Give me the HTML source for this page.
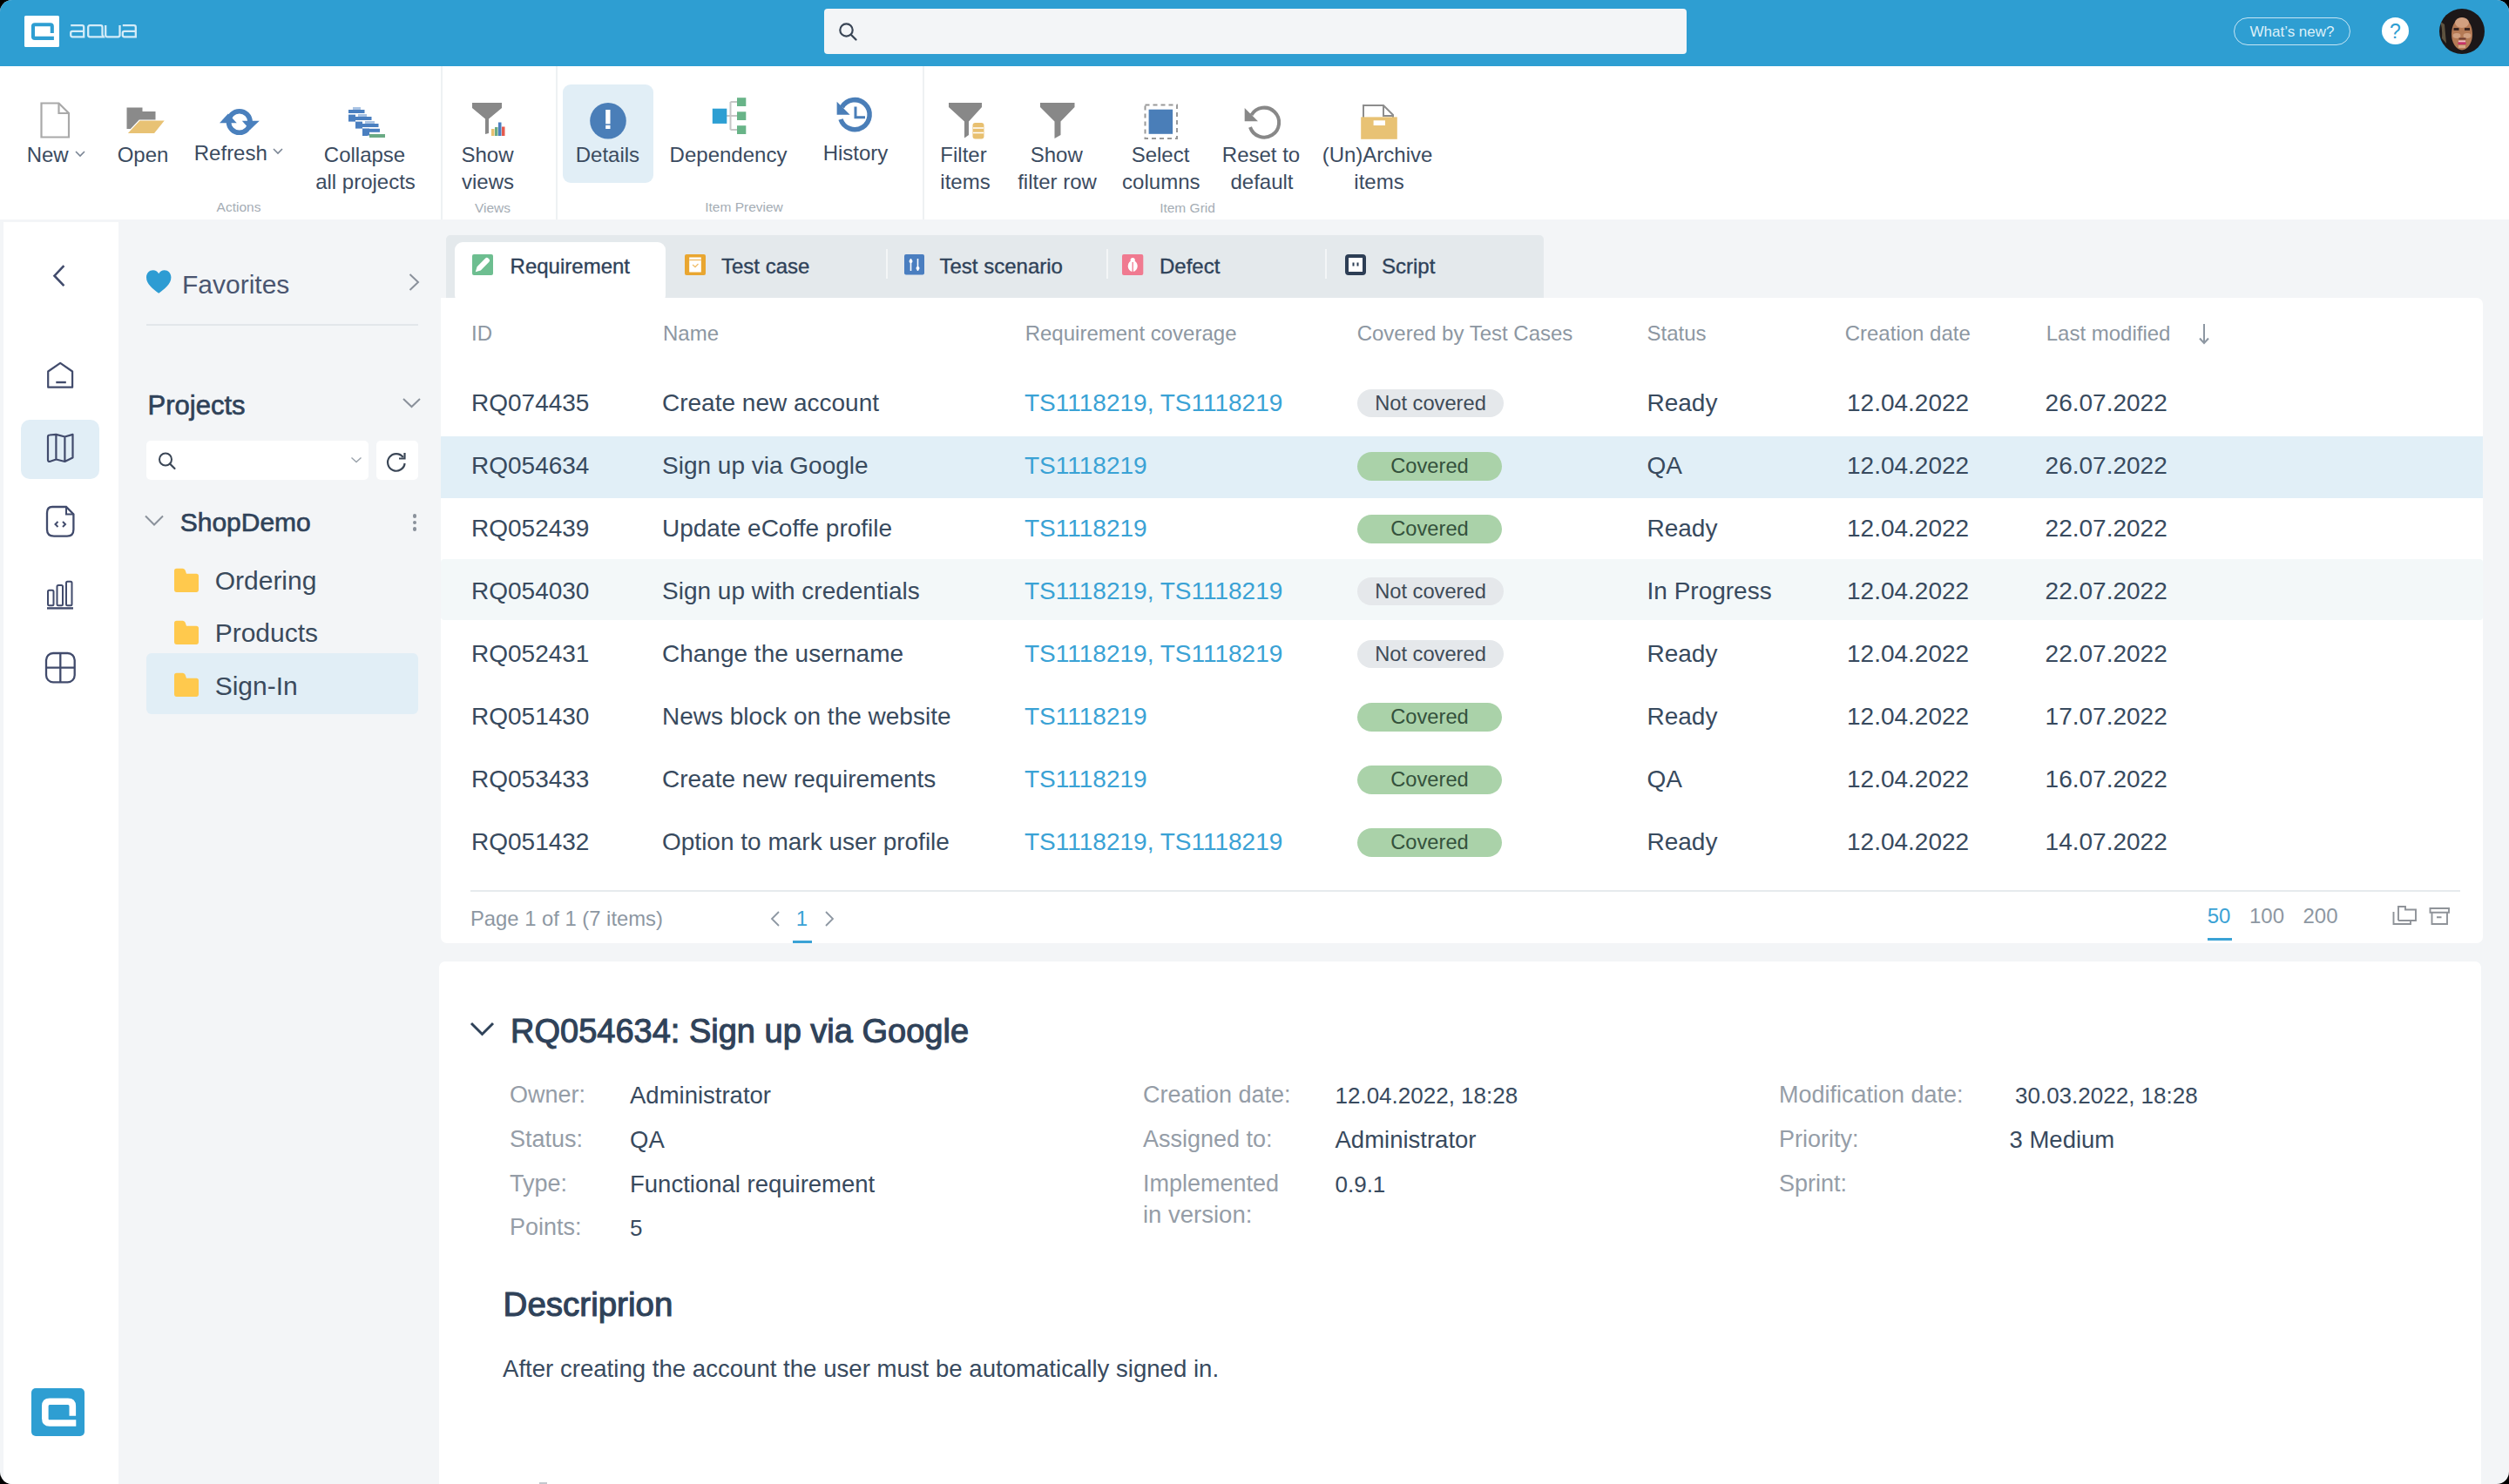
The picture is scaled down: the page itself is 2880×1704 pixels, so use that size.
<!DOCTYPE html>
<html><head><meta charset="utf-8">
<style>
*{margin:0;padding:0;box-sizing:border-box}
html,body{width:2880px;height:1704px;overflow:hidden;background:#000}
body{font-family:"Liberation Sans",sans-serif;color:#33465c}
#app{position:absolute;left:0;top:0;width:2880px;height:1704px;background:#f3f5f7;border-radius:14px;overflow:hidden}
.a{position:absolute;white-space:nowrap}
svg.a{overflow:visible}
</style></head><body>
<div id="app">

<div class="a" style="left:0px;top:0px;width:2880px;height:76px;background:#2e9ed2;border-radius:0px;"></div>
<div class="a" style="left:28px;top:18px;width:40px;height:36px;background:#fff;border-radius:1.5px;"></div>
<svg class="a" style="left:28px;top:18px" width="40" height="36" viewBox="0 0 40 36"><path d="M31.8 20 V12.2 Q31.8 10.2 29.8 10.2 H12 Q10 10.2 10 12.2 V23.9 Q10 25.9 12 25.9 H33.9" fill="none" stroke="#2e9ed2" stroke-width="4.1"/></svg>
<svg class="a" style="left:80px;top:28px" width="78" height="17" viewBox="0 0 78 17"><g fill="none" stroke="#d4ecf8" stroke-width="2.3"><path d="M1.2 1.2 H14.2 Q16.2 1.2 16.2 3.2 V14.3 H3.2 Q1.2 14.3 1.2 12.3 V9.8 Q1.2 7.8 3.2 7.8 H16.2"/><path d="M21.2 3.2 Q21.2 1.2 23.2 1.2 H35.5 Q37.5 1.2 37.5 3.2 V12 L38.8 14.3 H23.2 Q21.2 14.3 21.2 12.3 Z"/><path d="M41.2 1 V12.3 Q41.2 14.3 43.2 14.3 H55.5 Q57.5 14.3 57.5 12.3 V1"/><path d="M60.8 1.2 H73.8 Q75.8 1.2 75.8 3.2 V14.3 H62.8 Q60.8 14.3 60.8 12.3 V9.8 Q60.8 7.8 62.8 7.8 H75.8"/></g></svg>
<div class="a" style="left:946px;top:10px;width:990px;height:52px;background:#f3f5f7;border-radius:4px;"></div>
<svg class="a" style="left:962px;top:25px" width="24" height="24" viewBox="0 0 24 24"><circle cx="9.5" cy="9.5" r="7.2" fill="none" stroke="#3a4656" stroke-width="2.2"/><path d="M15 15 L20.5 20.5" stroke="#3a4656" stroke-width="2.4" stroke-linecap="round"/></svg>
<div class="a" style="left:2564px;top:20px;width:134px;height:32px;border:1.8px solid rgba(235,246,252,0.8);border-radius:16px"></div>
<div class="a" style="left:2331.0px;width:600px;text-align:center;top:27.6px;font-size:17px;line-height:17px;color:#dcf0f9;font-weight:normal;">What’s new?</div>
<div class="a" style="left:2734px;top:20px;width:31px;height:31px;background:#fff;border-radius:50%"></div>
<div class="a" style="left:2449.5px;width:600px;text-align:center;top:24.5px;font-size:23px;line-height:23px;color:#2e9ed2;font-weight:normal;">?</div>
<svg class="a" style="left:2800px;top:10px" width="52" height="52" viewBox="0 0 52 52"><defs><clipPath id="av"><circle cx="26" cy="26" r="26"/></clipPath></defs><g clip-path="url(#av)"><rect width="52" height="52" fill="#1c1718"/><path d="M0 14 Q4 20 3 34 L8 40 L6 18 Z" fill="#8a7a5a" opacity="0.6"/><ellipse cx="26" cy="29" rx="12" ry="18.5" fill="#b47a55"/><ellipse cx="26" cy="16" rx="8" ry="6" fill="#d2a080"/><ellipse cx="20" cy="31" rx="4.5" ry="3" fill="#d0a080"/><ellipse cx="32" cy="31" rx="4.5" ry="3" fill="#d0a080"/><rect x="16.5" y="22" width="6" height="3" fill="#3a2520"/><rect x="29" y="22" width="6" height="3" fill="#3a2520"/><rect x="22.5" y="33.5" width="8" height="2" fill="#6a3a30"/><rect x="22" y="36.5" width="8" height="2" fill="#f0c0c8"/><rect x="21.5" y="38.5" width="9" height="2.5" fill="#c8306a"/><rect x="22" y="42" width="8" height="3" fill="#d8a888"/></g></svg>
<div class="a" style="left:0px;top:76px;width:2880px;height:176px;background:#fff;border-radius:0px;"></div>
<div class="a" style="left:506px;top:76px;width:2px;height:176px;background:#eef1f3;border-radius:0px;"></div>
<div class="a" style="left:638px;top:76px;width:2px;height:176px;background:#eef1f3;border-radius:0px;"></div>
<div class="a" style="left:1059px;top:76px;width:2px;height:176px;background:#eef1f3;border-radius:0px;"></div>
<div class="a" style="left:646px;top:97px;width:104px;height:113px;background:#e1eef6;border-radius:9px;"></div>
<div class="a" style="left:-245.3px;width:600px;text-align:center;top:165.5px;font-size:24px;line-height:24px;color:#3b4b5f;font-weight:normal;">New</div>
<div class="a" style="left:-136.0px;width:600px;text-align:center;top:165.5px;font-size:24px;line-height:24px;color:#3b4b5f;font-weight:normal;">Open</div>
<div class="a" style="left:-35.2px;width:600px;text-align:center;top:164.0px;font-size:24px;line-height:24px;color:#3b4b5f;font-weight:normal;">Refresh</div>
<div class="a" style="left:118.5px;width:600px;text-align:center;top:165.5px;font-size:24px;line-height:24px;color:#3b4b5f;font-weight:normal;">Collapse</div>
<div class="a" style="left:119.5px;width:600px;text-align:center;top:197.1px;font-size:24px;line-height:24px;color:#3b4b5f;font-weight:normal;">all projects</div>
<div class="a" style="left:259.5px;width:600px;text-align:center;top:165.5px;font-size:24px;line-height:24px;color:#3b4b5f;font-weight:normal;">Show</div>
<div class="a" style="left:260.0px;width:600px;text-align:center;top:197.1px;font-size:24px;line-height:24px;color:#3b4b5f;font-weight:normal;">views</div>
<div class="a" style="left:397.4px;width:600px;text-align:center;top:165.5px;font-size:24px;line-height:24px;color:#3b4b5f;font-weight:normal;">Details</div>
<div class="a" style="left:536.0px;width:600px;text-align:center;top:165.5px;font-size:24px;line-height:24px;color:#3b4b5f;font-weight:normal;">Dependency</div>
<div class="a" style="left:682.0px;width:600px;text-align:center;top:164.0px;font-size:24px;line-height:24px;color:#3b4b5f;font-weight:normal;">History</div>
<div class="a" style="left:806.0px;width:600px;text-align:center;top:165.5px;font-size:24px;line-height:24px;color:#3b4b5f;font-weight:normal;">Filter</div>
<div class="a" style="left:808.0px;width:600px;text-align:center;top:197.1px;font-size:24px;line-height:24px;color:#3b4b5f;font-weight:normal;">items</div>
<div class="a" style="left:912.8px;width:600px;text-align:center;top:165.5px;font-size:24px;line-height:24px;color:#3b4b5f;font-weight:normal;">Show</div>
<div class="a" style="left:913.5px;width:600px;text-align:center;top:197.1px;font-size:24px;line-height:24px;color:#3b4b5f;font-weight:normal;">filter row</div>
<div class="a" style="left:1032.0px;width:600px;text-align:center;top:165.5px;font-size:24px;line-height:24px;color:#3b4b5f;font-weight:normal;">Select</div>
<div class="a" style="left:1032.8px;width:600px;text-align:center;top:197.1px;font-size:24px;line-height:24px;color:#3b4b5f;font-weight:normal;">columns</div>
<div class="a" style="left:1147.5px;width:600px;text-align:center;top:165.5px;font-size:24px;line-height:24px;color:#3b4b5f;font-weight:normal;">Reset to</div>
<div class="a" style="left:1148.5px;width:600px;text-align:center;top:197.1px;font-size:24px;line-height:24px;color:#3b4b5f;font-weight:normal;">default</div>
<div class="a" style="left:1281.0px;width:600px;text-align:center;top:165.5px;font-size:24px;line-height:24px;color:#3b4b5f;font-weight:normal;">(Un)Archive</div>
<div class="a" style="left:1283.0px;width:600px;text-align:center;top:197.1px;font-size:24px;line-height:24px;color:#3b4b5f;font-weight:normal;">items</div>
<div class="a" style="left:-26.0px;width:600px;text-align:center;top:229.9px;font-size:15.5px;line-height:15.5px;color:#a5adb5;font-weight:normal;">Actions</div>
<div class="a" style="left:265.5px;width:600px;text-align:center;top:231.4px;font-size:15.5px;line-height:15.5px;color:#a5adb5;font-weight:normal;">Views</div>
<div class="a" style="left:554.0px;width:600px;text-align:center;top:229.9px;font-size:15.5px;line-height:15.5px;color:#a5adb5;font-weight:normal;">Item Preview</div>
<div class="a" style="left:1063.0px;width:600px;text-align:center;top:230.6px;font-size:15.5px;line-height:15.5px;color:#a5adb5;font-weight:normal;">Item Grid</div>
<svg class="a" style="left:86px;top:173px" width="12" height="8" viewBox="0 0 12 8"><path d="M1 1 L6 6 L11 1" fill="none" stroke="#7a8594" stroke-width="1.6"/></svg>
<svg class="a" style="left:313px;top:170px" width="12" height="8" viewBox="0 0 12 8"><path d="M1 1 L6 6 L11 1" fill="none" stroke="#7a8594" stroke-width="1.6"/></svg>
<svg class="a" style="left:46px;top:117px" width="35" height="42" viewBox="0 0 35 42"><path d="M1.5 1.5 H21.5 L33 13 V40.5 H1.5 Z" fill="#fff" stroke="#a9a9a9" stroke-width="2.2"/><path d="M21.5 1.5 V13 H33" fill="none" stroke="#a9a9a9" stroke-width="2.2"/></svg>
<svg class="a" style="left:145px;top:123px" width="46" height="31" viewBox="0 0 46 31"><path d="M0.5 0.5 H18.5 V5 H33.5 V25 H0.5 Z" fill="#8a8a8a"/><path d="M0.5 30.5 H32.5 L45 15 H15 Z" fill="#e8c274" stroke="#fff" stroke-width="1.2"/></svg>
<svg class="a" style="left:250px;top:120px" width="50" height="38" viewBox="0 0 50 38"><circle cx="24.8" cy="20" r="12.3" fill="none" stroke="#4a80bd" stroke-width="5.6"/><path d="M11.9 10.5 L2 21.2 L21.8 21.2 Z" fill="#4a80bd"/><path d="M37 29 L27.8 18.7 L47.8 18.7 Z" fill="#4a80bd"/></svg>
<svg class="a" style="left:400px;top:123px" width="44" height="36" viewBox="0 0 44 36"><g fill="#4a7fc0"><rect x="0" y="3" width="18.5" height="4"/><rect x="0" y="8.6" width="8" height="8"/><rect x="8" y="11" width="18.5" height="4"/><rect x="8" y="16.6" width="8" height="8"/><rect x="16" y="19" width="18.5" height="4"/><rect x="16" y="24.6" width="8" height="8"/><rect x="16" y="24.8" width="20" height="4"/><rect x="16" y="29" width="6" height="4"/></g><rect x="24" y="31" width="18" height="4" fill="#6aaa84"/><g fill="#a9c3e3"><rect x="5" y="0" width="9" height="3"/><rect x="11" y="8" width="10" height="3"/><rect x="19" y="16" width="11" height="3"/></g></svg>
<svg class="a" style="left:542px;top:118px" width="40" height="40" viewBox="0 0 40 40"><path d="M0 0 H34 V6 L19 18.5 V35 L15 36 V18.5 L0 6 Z" fill="#888"/><rect x="22" y="30" width="3.5" height="8" fill="#e8c070"/><rect x="26" y="28" width="3.5" height="10" fill="#6aaa84"/><rect x="30" y="22.5" width="3.5" height="15.5" fill="#4a7fc0"/><rect x="34" y="27.5" width="3.5" height="10.5" fill="#e55a4e"/></svg>
<svg class="a" style="left:676px;top:117px" width="44" height="44" viewBox="0 0 44 44"><circle cx="22" cy="21.7" r="20.8" fill="#4a7eb8"/><rect x="19.2" y="9" width="5.3" height="16.3" fill="#fff"/><rect x="19.2" y="26.8" width="5.3" height="4.2" fill="#fff"/></svg>
<svg class="a" style="left:816px;top:111px" width="42" height="45" viewBox="0 0 42 45"><path d="M22.5 6 V38 M22.5 6 H30 M22.5 22 H30 M22.5 38 H30 M18 22 H22.5" stroke="#c6c6c6" stroke-width="2" fill="none"/><rect x="1.8" y="13.7" width="16.5" height="17.2" fill="#2d9fd3"/><rect x="30" y="1.2" width="10.3" height="9.8" fill="#68b488"/><rect x="30" y="17.3" width="10.3" height="9.7" fill="#68b488"/><rect x="30" y="33.2" width="10.3" height="9.8" fill="#68b488"/></svg>
<svg class="a" style="left:958px;top:111px" width="46" height="44" viewBox="0 0 46 44"><path d="M8.5 12 A17 17 0 1 1 7 26" fill="none" stroke="#4a7eb8" stroke-width="5.5"/><path d="M2.6 5.8 V20.8 H17.6 Z" fill="#4a7eb8"/><path d="M24 11.5 V23.7 H35" fill="none" stroke="#4a7eb8" stroke-width="3"/></svg>
<svg class="a" style="left:1088px;top:117px" width="44" height="44" viewBox="0 0 44 44"><path d="M1 1 H39 V6 L24 22.5 V38 L19 41.5 V22.5 L1 6 Z" fill="#888"/><g fill="#e8c070"><rect x="28.5" y="24" width="13" height="18.5" rx="3"/></g><path d="M29 30 H41 M29 35.5 H41" stroke="#fff" stroke-width="1.4"/></svg>
<svg class="a" style="left:1193px;top:117px" width="42" height="44" viewBox="0 0 42 44"><path d="M1 1 H40.5 V6 L24.5 22.5 V38 L17.5 42 V22.5 L1 6 Z" fill="#888"/></svg>
<svg class="a" style="left:1313px;top:119px" width="40" height="42" viewBox="0 0 40 42"><rect x="1.5" y="1.5" width="36.5" height="38.5" fill="none" stroke="#999" stroke-width="2" stroke-dasharray="5 4"/><rect x="5.6" y="6.7" width="27.5" height="28.1" fill="#4a7eb8"/></svg>
<svg class="a" style="left:1427px;top:119px" width="46" height="42" viewBox="0 0 46 42"><path d="M9.5 13 A17 17 0 1 1 8 27" fill="none" stroke="#888" stroke-width="4"/><path d="M1.7 4.9 V20.2 H17 Z" fill="#888"/></svg>
<svg class="a" style="left:1562px;top:119px" width="44" height="42" viewBox="0 0 44 42"><path d="M3 2 H26 L37 13 V17 H3 Z" fill="#fff" stroke="#8d8d8d" stroke-width="2"/><path d="M26 2 V14 H37" fill="none" stroke="#8d8d8d" stroke-width="2"/><rect x="0.2" y="15.4" width="41.6" height="25.4" fill="#e8c274"/><rect x="14.6" y="19.3" width="13.4" height="5.7" fill="#fff"/></svg>
<div class="a" style="left:4px;top:255px;width:132px;height:1449px;background:#fff;border-radius:0px;"></div>
<svg class="a" style="left:58px;top:302px" width="20" height="30" viewBox="0 0 20 30"><path d="M15.4 3.2 L4.5 14.7 L15.4 26.2" fill="none" stroke="#414b6c" stroke-width="2.6"/></svg>
<svg class="a" style="left:52px;top:413px" width="34" height="35" viewBox="0 0 34 35"><path d="M3.2 13.5 L17.2 3.8 L31.1 13.5 V31.7 H3.2 Z" fill="none" stroke="#414b6c" stroke-width="2.2" stroke-linejoin="round"/><path d="M12.3 26 H23.8" stroke="#414b6c" stroke-width="2.4"/></svg>
<div class="a" style="left:24px;top:482px;width:90px;height:68px;background:#e1eef6;border-radius:10px;"></div>
<svg class="a" style="left:52px;top:496px" width="36" height="37" viewBox="0 0 36 37"><path d="M3 5.5 Q3 3.5 5 3.5 L12.4 2.9 L22.4 5.5 L31.5 2.9 V29.5 L22.4 34 L12.4 31.5 L5 34 Q3 34 3 32 Z M12.4 2.9 V31.5 M22.4 5.5 V34" fill="none" stroke="#414b6c" stroke-width="2.2" stroke-linejoin="round"/></svg>
<svg class="a" style="left:52px;top:580px" width="36" height="38" viewBox="0 0 36 38"><path d="M8 2 H24 L32.4 10.4 V28 Q32.4 35.6 25 35.6 H10 Q2 35.6 2 28 V9 Q2 2 8 2 Z" fill="none" stroke="#414b6c" stroke-width="2.3"/><path d="M24 2 V10.4 H32.4" fill="none" stroke="#414b6c" stroke-width="2"/><path d="M14.5 19 L11.5 22 L14.5 25 M20 19 L23 22 L20 25" fill="none" stroke="#414b6c" stroke-width="2"/></svg>
<svg class="a" style="left:52px;top:664px" width="36" height="38" viewBox="0 0 36 38"><g fill="none" stroke="#414b6c" stroke-width="2"><rect x="3" y="13.7" width="6.5" height="17.5" rx="1.5"/><rect x="13.5" y="8" width="6.5" height="23.2" rx="1.5"/><rect x="24" y="3.7" width="6.5" height="27.5" rx="1.5"/></g><path d="M2 34.4 H32" stroke="#414b6c" stroke-width="2.4"/></svg>
<svg class="a" style="left:51px;top:748px" width="38" height="38" viewBox="0 0 38 38"><rect x="2" y="2" width="32.7" height="33.3" rx="8" fill="none" stroke="#414b6c" stroke-width="2.3"/><path d="M18.3 2 V35.3 M2 18.6 H34.7" stroke="#414b6c" stroke-width="2.3"/></svg>
<div class="a" style="left:36px;top:1594px;width:61px;height:55px;background:#2e9ed2;border-radius:5px;"></div>
<svg class="a" style="left:36px;top:1594px" width="61" height="55" viewBox="0 0 61 55"><path d="M47.3 31.8 V20.5 Q47.3 15.2 42 15.2 H21 Q15.8 15.2 15.8 20.5 V34.5 Q15.8 40 21 40 H51.3" fill="none" stroke="#fff" stroke-width="7.6"/></svg>
<svg class="a" style="left:167px;top:309px" width="31" height="30" viewBox="0 0 31 30"><path d="M15.2 27.8 C9 23 1 17.5 1 9.5 C1 4.5 4.5 1.2 8.7 1.2 C11.5 1.2 13.7 2.8 15.2 5.2 C16.7 2.8 18.9 1.2 21.7 1.2 C25.9 1.2 29.4 4.5 29.4 9.5 C29.4 17.5 21.4 23 15.2 27.8 Z" fill="#2d9cd3"/></svg>
<div class="a" style="left:209.0px;top:311.7px;font-size:30px;line-height:30px;color:#4a5570;font-weight:normal;">Favorites</div>
<svg class="a" style="left:468px;top:313px" width="16" height="22" viewBox="0 0 16 22"><path d="M2.5 2 L12 11 L2.5 20" fill="none" stroke="#8a919b" stroke-width="2"/></svg>
<div class="a" style="left:168px;top:372px;width:312px;height:2px;background:#e2e6ea;border-radius:0px;"></div>
<div class="a" style="left:169.6px;top:449.5px;font-size:31px;line-height:31px;color:#2f4259;font-weight:normal;-webkit-text-stroke:0.65px #2f4259">Projects</div>
<svg class="a" style="left:461px;top:456px" width="23" height="14" viewBox="0 0 23 14"><path d="M2 2 L11.5 11 L21 2" fill="none" stroke="#8a919b" stroke-width="2"/></svg>
<div class="a" style="left:168px;top:506px;width:255px;height:45px;background:#fff;border-radius:5px;"></div>
<div class="a" style="left:432px;top:506px;width:48px;height:45px;background:#fff;border-radius:5px;"></div>
<svg class="a" style="left:181px;top:518px" width="24" height="24" viewBox="0 0 24 24"><circle cx="9" cy="9.5" r="7" fill="none" stroke="#3a4656" stroke-width="2"/><path d="M14 14.5 L19.5 20" stroke="#3a4656" stroke-width="2.2" stroke-linecap="round"/></svg>
<svg class="a" style="left:402px;top:524px" width="14" height="9" viewBox="0 0 14 9"><path d="M1.5 1.5 L7 6.5 L12.5 1.5" fill="none" stroke="#9aa2ab" stroke-width="1.4"/></svg>
<svg class="a" style="left:442px;top:517px" width="26" height="24" viewBox="0 0 26 24"><path d="M20.7 8 A9.8 9.8 0 1 0 22.6 15" fill="none" stroke="#3a4656" stroke-width="2.2"/><path d="M22.5 3 V9.5 H16" fill="none" stroke="#3a4656" stroke-width="2.2"/></svg>
<svg class="a" style="left:165px;top:590px" width="24" height="16" viewBox="0 0 24 16"><path d="M2 2.5 L12 12.5 L22 2.5" fill="none" stroke="#8a919b" stroke-width="2"/></svg>
<div class="a" style="left:206.7px;top:584.8px;font-size:30px;line-height:30px;color:#2f4259;font-weight:normal;-webkit-text-stroke:0.65px #2f4259">ShopDemo</div>
<div class="a" style="left:473.5px;top:590px;width:4.5px;height:4.5px;border-radius:50%;background:#8a919b"></div>
<div class="a" style="left:473.5px;top:597.5px;width:4.5px;height:4.5px;border-radius:50%;background:#8a919b"></div>
<div class="a" style="left:473.5px;top:605px;width:4.5px;height:4.5px;border-radius:50%;background:#8a919b"></div>
<div class="a" style="left:168px;top:750px;width:312px;height:70px;background:#e1eef6;border-radius:6px;"></div>
<svg class="a" style="left:199px;top:651.5px" width="30" height="29" viewBox="0 0 30 29"><path d="M1 3.5 Q1 0.8 3.8 0.8 H10.5 Q12.5 0.8 13.5 2.5 L15 6.8 H26.3 Q29 6.8 29 9.5 V25 Q29 28 26.3 28 H3.8 Q1 28 1 25 Z" fill="#ffc94d"/></svg>
<svg class="a" style="left:199px;top:711.5px" width="30" height="29" viewBox="0 0 30 29"><path d="M1 3.5 Q1 0.8 3.8 0.8 H10.5 Q12.5 0.8 13.5 2.5 L15 6.8 H26.3 Q29 6.8 29 9.5 V25 Q29 28 26.3 28 H3.8 Q1 28 1 25 Z" fill="#ffc94d"/></svg>
<svg class="a" style="left:199px;top:772px" width="30" height="29" viewBox="0 0 30 29"><path d="M1 3.5 Q1 0.8 3.8 0.8 H10.5 Q12.5 0.8 13.5 2.5 L15 6.8 H26.3 Q29 6.8 29 9.5 V25 Q29 28 26.3 28 H3.8 Q1 28 1 25 Z" fill="#ffc94d"/></svg>
<div class="a" style="left:246.7px;top:652.3px;font-size:30px;line-height:30px;color:#3a4a5c;font-weight:normal;">Ordering</div>
<div class="a" style="left:246.7px;top:712.3px;font-size:30px;line-height:30px;color:#3a4a5c;font-weight:normal;">Products</div>
<div class="a" style="left:246.7px;top:772.6px;font-size:30px;line-height:30px;color:#3a4a5c;font-weight:normal;">Sign-In</div>
<div class="a" style="left:512px;top:270px;width:1260px;height:80px;background:#e4e9ec;border-radius:5px;"></div>
<div class="a" style="left:506px;top:342px;width:2344px;height:741px;background:#fff;border-radius:0px;border-radius:0 7px 7px 7px"></div>
<div class="a" style="left:522px;top:278px;width:242px;height:70px;background:#fff;border-radius:9px;"></div>
<svg class="a" style="left:542px;top:292px" width="24" height="24" viewBox="0 0 24 24"><rect width="24" height="24" rx="2" fill="#6dbe90"/><path d="M3.8 20.2 L5.6 14.2 L15.2 4.6 Q16.8 3 18.4 4.6 L19.4 5.6 Q21 7.2 19.4 8.8 L9.8 18.4 Z" fill="#fff"/></svg>
<svg class="a" style="left:786px;top:292px" width="24" height="24" viewBox="0 0 24 24"><rect width="24" height="24" rx="2" fill="#e9a630"/><rect x="5.2" y="3.5" width="13.6" height="17" fill="#fff"/><path d="M5.2 6.5 H18.8" stroke="#f0c070" stroke-width="1.5"/><path d="M9 12 L12 14.5 L15.5 11" stroke="#f0c070" stroke-width="1.4" fill="none"/></svg>
<svg class="a" style="left:1038px;top:292px" width="23" height="24" viewBox="0 0 23 24"><rect width="23" height="23.5" rx="2" fill="#4a7ec0"/><path d="M7.5 5 V19 M15.5 5 V19" stroke="#fff" stroke-width="1.6"/><circle cx="7.5" cy="8" r="2" fill="#fff"/><circle cx="15.5" cy="16" r="2" fill="#fff"/></svg>
<svg class="a" style="left:1288px;top:292px" width="25" height="24" viewBox="0 0 25 24"><rect width="24.3" height="24" rx="2" fill="#f07a90"/><ellipse cx="12.2" cy="13.5" rx="5.5" ry="6.5" fill="#fff"/><path d="M12.2 7 V20" stroke="#f07a90" stroke-width="1.3"/><circle cx="12.2" cy="6.5" r="2.6" fill="#fff"/></svg>
<svg class="a" style="left:1544px;top:292px" width="24" height="24" viewBox="0 0 24 24"><rect x="2" y="2" width="20" height="20" rx="2" fill="#fff" stroke="#2d3e55" stroke-width="4"/><rect x="8.5" y="9.5" width="2" height="4" fill="#2d3e55"/><rect x="13.5" y="9.5" width="2" height="4" fill="#2d3e55"/></svg>
<div class="a" style="left:1017px;top:286px;width:2px;height:34px;background:#f4f6f7;border-radius:0px;"></div>
<div class="a" style="left:1270px;top:286px;width:2px;height:34px;background:#f4f6f7;border-radius:0px;"></div>
<div class="a" style="left:1521px;top:286px;width:2px;height:34px;background:#f4f6f7;border-radius:0px;"></div>
<div class="a" style="left:585.6px;top:293.7px;font-size:24px;line-height:24px;color:#2f4259;font-weight:normal;-webkit-text-stroke:0.35px #2f4259">Requirement</div>
<div class="a" style="left:828.0px;top:293.7px;font-size:24px;line-height:24px;color:#2f4259;font-weight:normal;-webkit-text-stroke:0.35px #2f4259">Test case</div>
<div class="a" style="left:1078.5px;top:293.7px;font-size:24px;line-height:24px;color:#2f4259;font-weight:normal;-webkit-text-stroke:0.35px #2f4259">Test scenario</div>
<div class="a" style="left:1331.0px;top:293.7px;font-size:24px;line-height:24px;color:#2f4259;font-weight:normal;-webkit-text-stroke:0.35px #2f4259">Defect</div>
<div class="a" style="left:1586.0px;top:293.7px;font-size:24px;line-height:24px;color:#2f4259;font-weight:normal;-webkit-text-stroke:0.35px #2f4259">Script</div>
<div class="a" style="left:541.0px;top:370.7px;font-size:24px;line-height:24px;color:#8d97a2;font-weight:normal;">ID</div>
<div class="a" style="left:761.0px;top:370.7px;font-size:24px;line-height:24px;color:#8d97a2;font-weight:normal;">Name</div>
<div class="a" style="left:1176.7px;top:370.7px;font-size:24px;line-height:24px;color:#8d97a2;font-weight:normal;">Requirement coverage</div>
<div class="a" style="left:1557.7px;top:370.7px;font-size:24px;line-height:24px;color:#8d97a2;font-weight:normal;">Covered by Test Cases</div>
<div class="a" style="left:1890.5px;top:370.7px;font-size:24px;line-height:24px;color:#8d97a2;font-weight:normal;">Status</div>
<div class="a" style="left:2117.7px;top:370.7px;font-size:24px;line-height:24px;color:#8d97a2;font-weight:normal;">Creation date</div>
<div class="a" style="left:2348.7px;top:370.7px;font-size:24px;line-height:24px;color:#8d97a2;font-weight:normal;">Last modified</div>
<svg class="a" style="left:2522px;top:370px" width="16" height="28" viewBox="0 0 16 28"><path d="M8 2 V24 M3 18.5 L8 24 L13 18.5" fill="none" stroke="#8d97a2" stroke-width="2"/></svg>
<div class="a" style="left:506px;top:501px;width:2344px;height:71px;background:#e1eff7;border-radius:0px;"></div>
<div class="a" style="left:506px;top:642px;width:2344px;height:70px;background:#f3f8f9;border-radius:4px;"></div>
<div class="a" style="left:541.0px;top:449.3px;font-size:28px;line-height:28px;color:#384a5e;font-weight:normal;">RQ074435</div>
<div class="a" style="left:760.0px;top:449.3px;font-size:28px;line-height:28px;color:#384a5e;font-weight:normal;">Create new account</div>
<div class="a" style="left:1176.0px;top:449.3px;font-size:28px;line-height:28px;color:#3aa2d5;font-weight:normal;">TS1118219, TS1118219</div>
<div class="a" style="left:1558px;top:447px;width:168px;height:32px;background:#e5e8eb;border-radius:16px;"></div>
<div class="a" style="left:1342.0px;width:600px;text-align:center;top:452.4px;font-size:23.7px;line-height:23.7px;color:#3e4b58;font-weight:normal;">Not covered</div>
<div class="a" style="left:1890.5px;top:449.3px;font-size:28px;line-height:28px;color:#384a5e;font-weight:normal;">Ready</div>
<div class="a" style="left:2120.0px;top:449.3px;font-size:28px;line-height:28px;color:#384a5e;font-weight:normal;">12.04.2022</div>
<div class="a" style="left:2347.6px;top:449.3px;font-size:28px;line-height:28px;color:#384a5e;font-weight:normal;">26.07.2022</div>
<div class="a" style="left:541.0px;top:521.3px;font-size:28px;line-height:28px;color:#384a5e;font-weight:normal;">RQ054634</div>
<div class="a" style="left:760.0px;top:521.3px;font-size:28px;line-height:28px;color:#384a5e;font-weight:normal;">Sign up via Google</div>
<div class="a" style="left:1176.0px;top:521.3px;font-size:28px;line-height:28px;color:#3aa2d5;font-weight:normal;">TS1118219</div>
<div class="a" style="left:1558px;top:519px;width:166px;height:33px;background:#aad2a9;border-radius:17px;"></div>
<div class="a" style="left:1341.0px;width:600px;text-align:center;top:524.4px;font-size:23.7px;line-height:23.7px;color:#34513c;font-weight:normal;">Covered</div>
<div class="a" style="left:1890.5px;top:521.3px;font-size:28px;line-height:28px;color:#384a5e;font-weight:normal;">QA</div>
<div class="a" style="left:2120.0px;top:521.3px;font-size:28px;line-height:28px;color:#384a5e;font-weight:normal;">12.04.2022</div>
<div class="a" style="left:2347.6px;top:521.3px;font-size:28px;line-height:28px;color:#384a5e;font-weight:normal;">26.07.2022</div>
<div class="a" style="left:541.0px;top:593.3px;font-size:28px;line-height:28px;color:#384a5e;font-weight:normal;">RQ052439</div>
<div class="a" style="left:760.0px;top:593.3px;font-size:28px;line-height:28px;color:#384a5e;font-weight:normal;">Update eCoffe profile</div>
<div class="a" style="left:1176.0px;top:593.3px;font-size:28px;line-height:28px;color:#3aa2d5;font-weight:normal;">TS1118219</div>
<div class="a" style="left:1558px;top:591px;width:166px;height:33px;background:#aad2a9;border-radius:17px;"></div>
<div class="a" style="left:1341.0px;width:600px;text-align:center;top:596.4px;font-size:23.7px;line-height:23.7px;color:#34513c;font-weight:normal;">Covered</div>
<div class="a" style="left:1890.5px;top:593.3px;font-size:28px;line-height:28px;color:#384a5e;font-weight:normal;">Ready</div>
<div class="a" style="left:2120.0px;top:593.3px;font-size:28px;line-height:28px;color:#384a5e;font-weight:normal;">12.04.2022</div>
<div class="a" style="left:2347.6px;top:593.3px;font-size:28px;line-height:28px;color:#384a5e;font-weight:normal;">22.07.2022</div>
<div class="a" style="left:541.0px;top:665.3px;font-size:28px;line-height:28px;color:#384a5e;font-weight:normal;">RQ054030</div>
<div class="a" style="left:760.0px;top:665.3px;font-size:28px;line-height:28px;color:#384a5e;font-weight:normal;">Sign up with credentials</div>
<div class="a" style="left:1176.0px;top:665.3px;font-size:28px;line-height:28px;color:#3aa2d5;font-weight:normal;">TS1118219, TS1118219</div>
<div class="a" style="left:1558px;top:663px;width:168px;height:32px;background:#e5e8eb;border-radius:16px;"></div>
<div class="a" style="left:1342.0px;width:600px;text-align:center;top:668.4px;font-size:23.7px;line-height:23.7px;color:#3e4b58;font-weight:normal;">Not covered</div>
<div class="a" style="left:1890.5px;top:665.3px;font-size:28px;line-height:28px;color:#384a5e;font-weight:normal;">In Progress</div>
<div class="a" style="left:2120.0px;top:665.3px;font-size:28px;line-height:28px;color:#384a5e;font-weight:normal;">12.04.2022</div>
<div class="a" style="left:2347.6px;top:665.3px;font-size:28px;line-height:28px;color:#384a5e;font-weight:normal;">22.07.2022</div>
<div class="a" style="left:541.0px;top:737.3px;font-size:28px;line-height:28px;color:#384a5e;font-weight:normal;">RQ052431</div>
<div class="a" style="left:760.0px;top:737.3px;font-size:28px;line-height:28px;color:#384a5e;font-weight:normal;">Change the username</div>
<div class="a" style="left:1176.0px;top:737.3px;font-size:28px;line-height:28px;color:#3aa2d5;font-weight:normal;">TS1118219, TS1118219</div>
<div class="a" style="left:1558px;top:735px;width:168px;height:32px;background:#e5e8eb;border-radius:16px;"></div>
<div class="a" style="left:1342.0px;width:600px;text-align:center;top:740.4px;font-size:23.7px;line-height:23.7px;color:#3e4b58;font-weight:normal;">Not covered</div>
<div class="a" style="left:1890.5px;top:737.3px;font-size:28px;line-height:28px;color:#384a5e;font-weight:normal;">Ready</div>
<div class="a" style="left:2120.0px;top:737.3px;font-size:28px;line-height:28px;color:#384a5e;font-weight:normal;">12.04.2022</div>
<div class="a" style="left:2347.6px;top:737.3px;font-size:28px;line-height:28px;color:#384a5e;font-weight:normal;">22.07.2022</div>
<div class="a" style="left:541.0px;top:809.3px;font-size:28px;line-height:28px;color:#384a5e;font-weight:normal;">RQ051430</div>
<div class="a" style="left:760.0px;top:809.3px;font-size:28px;line-height:28px;color:#384a5e;font-weight:normal;">News block on the website</div>
<div class="a" style="left:1176.0px;top:809.3px;font-size:28px;line-height:28px;color:#3aa2d5;font-weight:normal;">TS1118219</div>
<div class="a" style="left:1558px;top:807px;width:166px;height:33px;background:#aad2a9;border-radius:17px;"></div>
<div class="a" style="left:1341.0px;width:600px;text-align:center;top:812.4px;font-size:23.7px;line-height:23.7px;color:#34513c;font-weight:normal;">Covered</div>
<div class="a" style="left:1890.5px;top:809.3px;font-size:28px;line-height:28px;color:#384a5e;font-weight:normal;">Ready</div>
<div class="a" style="left:2120.0px;top:809.3px;font-size:28px;line-height:28px;color:#384a5e;font-weight:normal;">12.04.2022</div>
<div class="a" style="left:2347.6px;top:809.3px;font-size:28px;line-height:28px;color:#384a5e;font-weight:normal;">17.07.2022</div>
<div class="a" style="left:541.0px;top:881.3px;font-size:28px;line-height:28px;color:#384a5e;font-weight:normal;">RQ053433</div>
<div class="a" style="left:760.0px;top:881.3px;font-size:28px;line-height:28px;color:#384a5e;font-weight:normal;">Create new requirements</div>
<div class="a" style="left:1176.0px;top:881.3px;font-size:28px;line-height:28px;color:#3aa2d5;font-weight:normal;">TS1118219</div>
<div class="a" style="left:1558px;top:879px;width:166px;height:33px;background:#aad2a9;border-radius:17px;"></div>
<div class="a" style="left:1341.0px;width:600px;text-align:center;top:884.4px;font-size:23.7px;line-height:23.7px;color:#34513c;font-weight:normal;">Covered</div>
<div class="a" style="left:1890.5px;top:881.3px;font-size:28px;line-height:28px;color:#384a5e;font-weight:normal;">QA</div>
<div class="a" style="left:2120.0px;top:881.3px;font-size:28px;line-height:28px;color:#384a5e;font-weight:normal;">12.04.2022</div>
<div class="a" style="left:2347.6px;top:881.3px;font-size:28px;line-height:28px;color:#384a5e;font-weight:normal;">16.07.2022</div>
<div class="a" style="left:541.0px;top:953.3px;font-size:28px;line-height:28px;color:#384a5e;font-weight:normal;">RQ051432</div>
<div class="a" style="left:760.0px;top:953.3px;font-size:28px;line-height:28px;color:#384a5e;font-weight:normal;">Option to mark user profile</div>
<div class="a" style="left:1176.0px;top:953.3px;font-size:28px;line-height:28px;color:#3aa2d5;font-weight:normal;">TS1118219, TS1118219</div>
<div class="a" style="left:1558px;top:951px;width:166px;height:33px;background:#aad2a9;border-radius:17px;"></div>
<div class="a" style="left:1341.0px;width:600px;text-align:center;top:956.4px;font-size:23.7px;line-height:23.7px;color:#34513c;font-weight:normal;">Covered</div>
<div class="a" style="left:1890.5px;top:953.3px;font-size:28px;line-height:28px;color:#384a5e;font-weight:normal;">Ready</div>
<div class="a" style="left:2120.0px;top:953.3px;font-size:28px;line-height:28px;color:#384a5e;font-weight:normal;">12.04.2022</div>
<div class="a" style="left:2347.6px;top:953.3px;font-size:28px;line-height:28px;color:#384a5e;font-weight:normal;">14.07.2022</div>
<div class="a" style="left:540px;top:1022px;width:2284px;height:2px;background:#e6eaed;border-radius:0px;"></div>
<div class="a" style="left:540.0px;top:1043.4px;font-size:23.8px;line-height:23.8px;color:#8d97a2;font-weight:normal;">Page 1 of 1 (7 items)</div>
<svg class="a" style="left:883px;top:1045px" width="14" height="20" viewBox="0 0 14 20"><path d="M11 2 L3 10 L11 18" fill="none" stroke="#8d97a2" stroke-width="1.8"/></svg>
<svg class="a" style="left:945px;top:1045px" width="14" height="20" viewBox="0 0 14 20"><path d="M3 2 L11 10 L3 18" fill="none" stroke="#8d97a2" stroke-width="1.8"/></svg>
<div class="a" style="left:620.5px;width:600px;text-align:center;top:1043.2px;font-size:24px;line-height:24px;color:#3aa2d5;font-weight:normal;">1</div>
<div class="a" style="left:910px;top:1080px;width:22px;height:3px;background:#3aa2d5;border-radius:0px;"></div>
<div class="a" style="left:2247.0px;width:600px;text-align:center;top:1039.7px;font-size:24px;line-height:24px;color:#3aa2d5;font-weight:normal;">50</div>
<div class="a" style="left:2534px;top:1077px;width:28px;height:3px;background:#3aa2d5;border-radius:0px;"></div>
<div class="a" style="left:2302.0px;width:600px;text-align:center;top:1039.7px;font-size:24px;line-height:24px;color:#8d97a2;font-weight:normal;">100</div>
<div class="a" style="left:2363.5px;width:600px;text-align:center;top:1039.7px;font-size:24px;line-height:24px;color:#8d97a2;font-weight:normal;">200</div>
<svg class="a" style="left:2744px;top:1038px" width="32" height="26" viewBox="0 0 32 26"><path d="M3.5 9 V23 H23 V19 M9 19 V3 H17 V6.5 H29 V19 H9" fill="none" stroke="#8f9399" stroke-width="1.9"/></svg>
<svg class="a" style="left:2786px;top:1038px" width="28" height="26" viewBox="0 0 28 26"><path d="M3.5 5 H25 V9.8 H3.5 Z M5.5 9.8 V23 H23 V9.8 M11 15.2 H16.5" fill="none" stroke="#8f9399" stroke-width="1.9"/></svg>
<div class="a" style="left:504px;top:1104px;width:2344px;height:620px;background:#fff;border-radius:7px;"></div>
<svg class="a" style="left:538px;top:1172px" width="32" height="20" viewBox="0 0 32 20"><path d="M3 3 L15.5 15.5 L28 3" fill="none" stroke="#2f4259" stroke-width="3"/></svg>
<div class="a" style="left:586.0px;top:1165.4px;font-size:38px;line-height:38px;color:#2f4259;font-weight:normal;-webkit-text-stroke:1.1px #2f4259">RQ054634: Sign up via Google</div>
<div class="a" style="left:585.0px;top:1244.1px;font-size:27px;line-height:27px;color:#959da7;font-weight:normal;">Owner:</div>
<div class="a" style="left:723.0px;top:1243.7px;font-size:27.5px;line-height:27.5px;color:#384a5e;font-weight:normal;">Administrator</div>
<div class="a" style="left:1312.0px;top:1244.1px;font-size:27px;line-height:27px;color:#959da7;font-weight:normal;">Creation date:</div>
<div class="a" style="left:1532.5px;top:1245.0px;font-size:26px;line-height:26px;color:#384a5e;font-weight:normal;">12.04.2022, 18:28</div>
<div class="a" style="left:2042.0px;top:1244.1px;font-size:27px;line-height:27px;color:#959da7;font-weight:normal;">Modification date:</div>
<div class="a" style="left:2313.0px;top:1245.0px;font-size:26px;line-height:26px;color:#384a5e;font-weight:normal;">30.03.2022, 18:28</div>
<div class="a" style="left:585.0px;top:1295.1px;font-size:27px;line-height:27px;color:#959da7;font-weight:normal;">Status:</div>
<div class="a" style="left:723.0px;top:1294.7px;font-size:27.5px;line-height:27.5px;color:#384a5e;font-weight:normal;">QA</div>
<div class="a" style="left:1312.0px;top:1295.1px;font-size:27px;line-height:27px;color:#959da7;font-weight:normal;">Assigned to:</div>
<div class="a" style="left:1532.5px;top:1294.7px;font-size:27.5px;line-height:27.5px;color:#384a5e;font-weight:normal;">Administrator</div>
<div class="a" style="left:2042.0px;top:1295.1px;font-size:27px;line-height:27px;color:#959da7;font-weight:normal;">Priority:</div>
<div class="a" style="left:2306.5px;top:1294.7px;font-size:27.5px;line-height:27.5px;color:#384a5e;font-weight:normal;">3 Medium</div>
<div class="a" style="left:585.0px;top:1346.1px;font-size:27px;line-height:27px;color:#959da7;font-weight:normal;">Type:</div>
<div class="a" style="left:723.0px;top:1345.7px;font-size:27.5px;line-height:27.5px;color:#384a5e;font-weight:normal;">Functional requirement</div>
<div class="a" style="left:1312.0px;top:1346.1px;font-size:27px;line-height:27px;color:#959da7;font-weight:normal;">Implemented</div>
<div class="a" style="left:1532.5px;top:1347.0px;font-size:26px;line-height:26px;color:#384a5e;font-weight:normal;">0.9.1</div>
<div class="a" style="left:2042.0px;top:1346.1px;font-size:27px;line-height:27px;color:#959da7;font-weight:normal;">Sprint:</div>
<div class="a" style="left:585.0px;top:1396.1px;font-size:27px;line-height:27px;color:#959da7;font-weight:normal;">Points:</div>
<div class="a" style="left:723.0px;top:1397.0px;font-size:26px;line-height:26px;color:#384a5e;font-weight:normal;">5</div>
<div class="a" style="left:1312.0px;top:1380.7px;font-size:27.5px;line-height:27.5px;color:#959da7;font-weight:normal;">in version:</div>
<div class="a" style="left:577.6px;top:1479.2px;font-size:38.5px;line-height:38.5px;color:#2f4259;font-weight:normal;-webkit-text-stroke:1.1px #2f4259">Descriprion</div>
<div class="a" style="left:577.0px;top:1557.6px;font-size:27.6px;line-height:27.6px;color:#384a5e;font-weight:normal;">After creating the account the user must be automatically signed in.</div>
<div class="a" style="left:619px;top:1702px;width:9px;height:2px;background:#c3c8ce;border-radius:0px;"></div>
</div></body></html>
